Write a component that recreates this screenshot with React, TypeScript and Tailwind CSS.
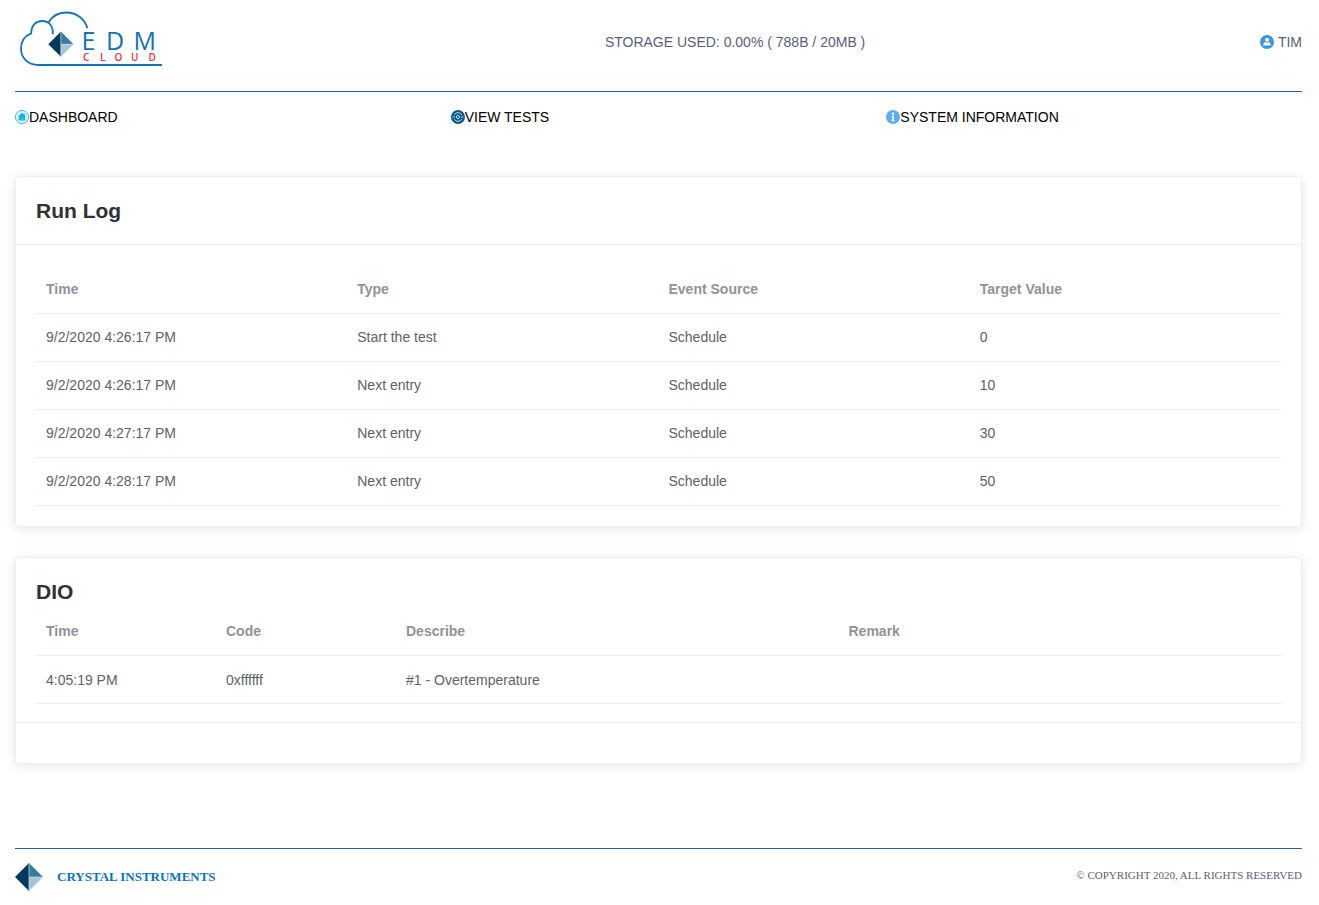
import type { ReactNode } from "react";

const runLog = [
  ["9/2/2020 4:26:17 PM", "Start the test", "Schedule", "0"],
  ["9/2/2020 4:26:17 PM", "Next entry", "Schedule", "10"],
  ["9/2/2020 4:27:17 PM", "Next entry", "Schedule", "30"],
  ["9/2/2020 4:28:17 PM", "Next entry", "Schedule", "50"],
];

const dio = [["4:05:19 PM", "0xffffff", "#1 - Overtemperature", ""]];

function Diamond() {
  return (
    <>
      <path d="M14 0 0 14l14 14z" fill="#04395e" />
      <path d="M14 0v14h14z" fill="#367b99" />
      <path d="M14 28V14h14z" fill="#a9c3d8" />
      <path d="M14 1v26M14 14h13" stroke="#c3d5e2" strokeWidth="0.8" fill="none" />
    </>
  );
}

function CloudLogo() {
  return (
    <svg viewBox="0 0 147 60" className="h-[60px] w-[147px]" role="img" aria-label="EDM Cloud">
      <g fill="none" stroke="#0f73b9" strokeWidth="1.8">
        <path d="M147 57H23.300C12.500 57 6 49.500 6 40.500c0-7 4-12.700 10.200-15.200C16.200 18 20.500 13 27.300 13c6.500 0 11.200 5 10.400 13.300" />
        <path d="M33.300 14.500C37.500 7.800 43.500 4.500 51 4.500c10 0 18.800 6 21.500 15.800" />
      </g>
      <g transform="translate(33.300 23.600) scale(0.9)">
        <Diamond />
      </g>
      <g fontFamily="Open Sans, sans-serif">
        <g fontSize="25" fill="#0f73b9">
          <text x="66.500" y="41.500">E</text>
          <text x="91" y="41.500">D</text>
          <text x="118.500" y="41.500">M</text>
        </g>
        <g fontSize="10" fontWeight="600" fill="#f0343c">
          <text x="68" y="53">C</text>
          <text x="85" y="53">L</text>
          <text x="99.500" y="53">O</text>
          <text x="116" y="53">U</text>
          <text x="133.500" y="53">D</text>
        </g>
      </g>
    </svg>
  );
}

function UserIcon() {
  return (
    <svg viewBox="0 0 14 14" className="size-3.5" aria-hidden="true">
      <circle cx="7" cy="7" r="7" fill="#3b97dc" />
      <circle cx="7" cy="4.800" r="2" fill="#fff" />
      <path d="M3.300 10.400c0-2.300 1.300-3.300 2.200-3.500L7 8l1.500-1.100c.9.2 2.200 1.200 2.200 3.500z" fill="#fff" />
    </svg>
  );
}

function HomeIcon() {
  return (
    <svg viewBox="0 0 14 14" className="size-3.5" aria-hidden="true">
      <circle cx="7" cy="7" r="6.500" fill="#fff" stroke="#27b5d8" />
      <circle cx="7" cy="7" r="5.400" fill="#d4f2f9" />
      <path d="M7 2.800 3 6.400h.8v4.200h6.400V6.400h.8L9.700 5.200V3.600h-.9v.8z" fill="#12b4dc" />
      <path d="M6.200 10.600V8.400h1.600v2.200z" fill="#58cae5" />
    </svg>
  );
}

function TestsIcon() {
  return (
    <svg viewBox="0 0 14 14" className="size-3.5" aria-hidden="true">
      <circle cx="7" cy="7" r="7" fill="#0c5a8e" />
      <g fill="none" stroke="#c4dae8" strokeWidth="1">
        <path d="M3.300 4.800a4.300 4.300 0 0 1 7.400 0M3.300 9.200a4.300 4.300 0 0 0 7.400 0" />
        <circle cx="7" cy="7" r="1.600" />
        <path d="M1.700 7h2.300M10 7h2.300" />
      </g>
    </svg>
  );
}

function InfoIcon() {
  return (
    <svg viewBox="0 0 14 14" className="size-3.5" aria-hidden="true">
      <circle cx="7" cy="7" r="7" fill="#5badf3" />
      <circle cx="7" cy="3.700" r="1.200" fill="#fff" />
      <path d="M5.500 5.700h2.500v4.500h.7v1H5.400v-1h.8V6.700h-.7z" fill="#fff" />
    </svg>
  );
}

function NavLink({ icon, children }: { icon: ReactNode; children: ReactNode }) {
  return (
    <a href="#" className="flex items-center text-black">
      {icon}
      {children}
    </a>
  );
}

function DataTable({ label, columns, widths, rows }: { label: string; columns: string[]; widths: string[]; rows: string[][] }) {
  return (
    <table aria-label={label} className="w-full table-fixed border-collapse text-left">
      <thead>
        <tr className="h-12 border-b border-[#ebeef5] text-[#909399]">
          {columns.map((column, i) => (
            <th key={column} scope="col" className={`${widths[i]} px-2.5 font-bold`}>
              {column}
            </th>
          ))}
        </tr>
      </thead>
      <tbody>
        {rows.map((row, i) => (
          <tr key={i} className="h-12 border-b border-[#ebeef5] text-[#606266]">
            {row.map((cell, j) => (
              <td key={j} className="px-2.5">
                {cell}
              </td>
            ))}
          </tr>
        ))}
      </tbody>
    </table>
  );
}

function Card({ children }: { children: ReactNode }) {
  return (
    <section className="rounded border border-[#ebeef5] bg-white shadow-[0_2px_12px_0_rgba(0,0,0,0.1)]">
      {children}
    </section>
  );
}

export default function App() {
  return (
    <div className="pr-[17px] pl-[15px] font-['Liberation_Sans',Arial,sans-serif] text-sm leading-6">
      <header className="grid h-[92px] grid-cols-[11fr_10fr_3fr] items-start border-b border-[#1f66ad] pt-2 text-[#5a6078]">
        <CloudLogo />
        <p className="pt-[22px]">STORAGE USED: 0.00% ( 788B / 20MB )</p>
        <a href="#" className="flex items-center gap-1 justify-self-end pt-[22px]">
          <UserIcon />
          TIM
        </a>
      </header>

      <nav className="grid grid-cols-3 gap-5 pt-[13px]">
        <NavLink icon={<HomeIcon />}>DASHBOARD</NavLink>
        <NavLink icon={<TestsIcon />}>VIEW TESTS</NavLink>
        <NavLink icon={<InfoIcon />}>SYSTEM INFORMATION</NavLink>
      </nav>

      <main className="flex flex-col gap-[30px] pt-[47px]">
        <Card>
          <div className="border-b border-[#ebeef5] px-5 pt-[22px] pb-[21px]">
            <h2 className="text-[21px] leading-6 font-bold text-[#303133]">Run Log</h2>
          </div>
          <div className="p-5">
            <DataTable
              label="Run Log"
              columns={["Time", "Type", "Event Source", "Target Value"]}
              widths={["w-1/4", "w-1/4", "w-1/4", "w-1/4"]}
              rows={runLog}
            />
          </div>
        </Card>
        <Card>
          <div className="border-b border-[#ebeef5] px-5 pt-[22px] pb-[18px]">
            <h2 className="mb-1 text-[21px] leading-6 font-bold text-[#303133]">DIO</h2>
            <DataTable
              label="DIO"
              columns={["Time", "Code", "Describe", "Remark"]}
              widths={["w-[180px]", "w-[180px]", "w-auto", "w-auto"]}
              rows={dio}
            />
          </div>
          <div className="h-10" />
        </Card>
      </main>

      <footer className="mt-[84px] flex items-start justify-between border-t border-[#1f66ad] pt-3.5 font-['Liberation_Serif','Times_New_Roman',serif]">
        <a href="#" className="flex items-center gap-3.5 text-[13px] font-bold text-[#0a73bb]">
          <svg viewBox="0 0 28 28" className="size-7" aria-hidden="true">
            <Diamond />
          </svg>
          CRYSTAL INSTRUMENTS
        </a>
        <p className="text-[11px] leading-6 text-[#5a6078]">© COPYRIGHT 2020, ALL RIGHTS RESERVED</p>
      </footer>
    </div>
  );
}
